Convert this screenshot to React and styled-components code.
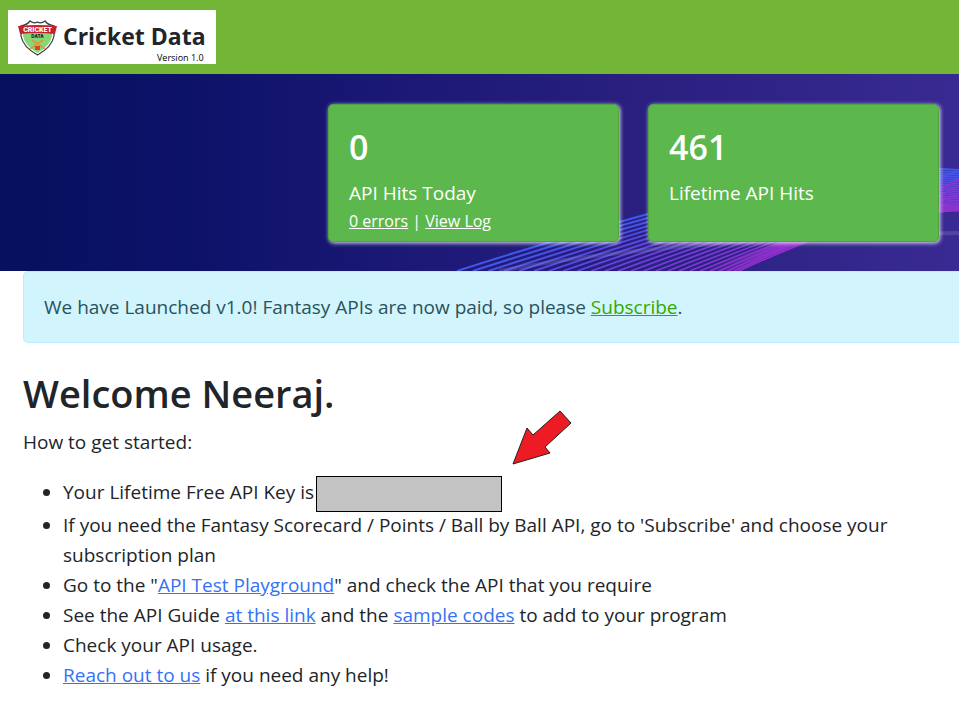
import React from 'react';
import styled, { createGlobalStyle } from 'styled-components';

const GlobalStyle = createGlobalStyle`
  * {
    box-sizing: border-box;
  }

  body {
    margin: 0;
    background: #fff;
    color: #212529;
    font-family: 'Segoe UI', 'Open Sans', 'Noto Sans', sans-serif;
    font-size: 19px;
    line-height: 30px;
  }
`;

const Header = styled.header`
  display: flex;
  padding: 10px 8px;
  background: #73b536;
`;

const Brand = styled.a`
  display: flex;
  align-items: center;
  gap: 6px;
  height: 54px;
  padding: 2px 10px 0;
  background: #fff;
  color: #212529;
  text-decoration: none;
`;

const BrandText = styled.span`
  display: flex;
  flex-direction: column;
  align-items: flex-end;
  padding-top: 8px;
`;

const BrandName = styled.span`
  font-size: 23px;
  font-weight: 700;
  line-height: 32px;
`;

const BrandVersion = styled.span`
  padding-right: 2px;
  color: #000;
  font-size: 9px;
  line-height: 12px;
`;

const Banner = styled.section`
  position: relative;
  overflow: hidden;
  background: linear-gradient(90deg, #06105e 0%, #0d1268 20%, #1b1876 42%, #2a2080 68%, #382a92 100%);
`;

const WaveArt = styled.svg`
  position: absolute;
  right: 0;
  bottom: 0;
  width: 520px;
  height: 120px;
`;

const Stats = styled.div`
  position: relative;
  display: grid;
  grid-template-columns: repeat(3, 1fr);
  gap: 29px;
  padding: 30px 20px 29px 8px;
`;

const StatCard = styled.article`
  min-height: 138px;
  padding: 19px 20px 6px;
  border: 1px solid #4fa440;
  border-radius: 5px;
  background: #5cb74c;
  box-shadow: 1px 1px 4px rgba(255, 255, 255, 0.9);
  color: #fff;

  &:first-child {
    grid-column: 2;
  }
`;

const StatValue = styled.h2`
  margin: 0 0 8px;
  font-size: 34px;
  font-weight: 600;
  line-height: 46px;
`;

const StatLabel = styled.div`
  line-height: 30px;
`;

const StatLinks = styled.div`
  font-size: 16px;
  line-height: 26px;

  a {
    color: #fff;
  }
`;

const Main = styled.main`
  padding-left: 23px;
`;

const Alert = styled.div`
  padding: 20px;
  border: 1px solid #b6effb;
  border-right: none;
  border-radius: 5px 0 0 5px;
  background: #d2f4fc;
  color: #29525c;

  a {
    color: #35a800;
  }
`;

const Content = styled.div`
  padding: 26px 24px 24px 0;
`;

const Title = styled.h1`
  margin: 0 0 10px;
  font-size: 38px;
  font-weight: 600;
  line-height: 48px;
`;

const Intro = styled.p`
  margin: 0 0 18px;
`;

const Steps = styled.ul`
  margin: 0;
  padding-left: 40px;

  a {
    color: #3472f7;
  }
`;

const KeyStep = styled.li`
  position: relative;
  line-height: 35px;
`;

const KeyBox = styled.span`
  display: inline-block;
  width: 186px;
  height: 36px;
  margin: -2px 0 -2px 2px;
  border: 1px solid #000;
  background: #c3c3c3;
  vertical-align: middle;
`;

const Arrow = styled.svg`
  position: absolute;
  left: 448px;
  bottom: 43px;
  width: 62px;
  height: 58px;
`;

const LINES = 24;

const mix = (a, b, t) => a + (b - a) * t;

const Shield = () => (
  <svg width="39" height="36" viewBox="0 0 39 36" aria-hidden="true">
    <path d="M3 6 Q9 5 12 1 Q16 4 19.500 2 Q23 4 27 1 Q30 5 36 6 V16 Q34 27 19.500 35 Q5 27 3 16Z" fill="#fff" stroke="#3a4141" strokeWidth="1.300" />
    <path d="M5 11 H34 V16 Q32 26 19.500 33 Q7 26 5 16Z" fill="#86d874" />
    <path d="M12 29 L25 20 M27 29 L14 20" stroke="#d79a45" strokeWidth="1.800" />
    <path d="M17 26 H22 V30 H17Z" fill="#e14425" />
    <path d="M0 6 Q19.500 4 39 6 L37 14 Q19.500 12 2 14Z" fill="#c5202f" />
    <text x="19.500" y="12" textAnchor="middle" fill="#fff" fontFamily="Roboto, sans-serif" fontSize="7" fontWeight="900">CRICKET</text>
    <text x="19.500" y="18" textAnchor="middle" fill="#222" fontFamily="Roboto, sans-serif" fontSize="5" fontWeight="900">DATA</text>
  </svg>
);

const Waves = () => (
  <WaveArt viewBox="0 0 520 120" aria-hidden="true">
    <defs>
      <linearGradient id="ribbon" x1="0" x2="1">
        <stop offset="0" stopColor="#8a30d0" stopOpacity="0" />
        <stop offset="0.300" stopColor="#9230cc" />
        <stop offset="1" stopColor="#7a3fd6" />
      </linearGradient>
    </defs>
    <path d="M265 120 Q330 92 400 72 T520 54 V60 Q440 66 366 90 Q330 104 300 120Z" fill="url(#ribbon)" />
    {Array.from({ length: LINES }, (_, i) => {
      // the strands sit closer together towards the lower edge of the ribbon
      const t = 1 - (1 - i / (LINES - 1)) ** 1.3;
      const color = `rgb(${mix(62, 145, t)}, ${mix(88, 48, t)}, ${mix(235, 205, t)})`;
      return (
        <path
          key={i}
          d={`M${mix(18, 300, t)} 120 Q${mix(180, 370, t)} ${mix(68, 88, t)} ${mix(300, 420, t)} ${mix(40, 72, t)} T520 ${mix(19, 60, t)}`}
          fill="none"
          stroke={color}
          strokeWidth={mix(2, 1.5, t)}
        />
      );
    })}
    <path d="M498 40 L520 29 M498 46 L520 35 M498 52 L520 42" stroke="#9230cc" strokeWidth="1.500" />
    <path d="M60 120 Q240 86 520 82" fill="none" stroke="#8f86c8" strokeOpacity="0.300" strokeWidth="4" />
  </WaveArt>
);

const App = () => (
  <>
    <GlobalStyle />
    <Header>
      <Brand href="#">
        <Shield />
        <BrandText>
          <BrandName>Cricket Data</BrandName>
          <BrandVersion>Version 1.0</BrandVersion>
        </BrandText>
      </Brand>
    </Header>
    <Banner>
      <Waves />
      <Stats>
        <StatCard>
          <StatValue>0</StatValue>
          <StatLabel>API Hits Today</StatLabel>
          <StatLinks>
            <a href="#errors">0 errors</a> | <a href="#log">View Log</a>
          </StatLinks>
        </StatCard>
        <StatCard>
          <StatValue>461</StatValue>
          <StatLabel>Lifetime API Hits</StatLabel>
        </StatCard>
      </Stats>
    </Banner>
    <Main>
      <Alert role="status">
        We have Launched v1.0! Fantasy APIs are now paid, so please <a href="#subscribe">Subscribe</a>.
      </Alert>
      <Content>
        <Title>Welcome Neeraj.</Title>
        <Intro>How to get started:</Intro>
        <Steps>
          <KeyStep>
            Your Lifetime Free API Key is
            <KeyBox />
            <Arrow viewBox="0 0 62 58" aria-hidden="true">
              <path d="M2 55 L16 19 L22 26 L49 2 L60 14 L34 38 L39 44Z" fill="#ed1c24" stroke="#222" strokeWidth="1" />
            </Arrow>
          </KeyStep>
          <li>
            If you need the Fantasy Scorecard / Points / Ball by Ball API, go to 'Subscribe' and choose your
            subscription plan
          </li>
          <li>
            Go to the "<a href="#playground">API Test Playground</a>" and check the API that you require
          </li>
          <li>
            See the API Guide <a href="#guide">at this link</a> and the <a href="#samples">sample codes</a> to add to
            your program
          </li>
          <li>Check your API usage.</li>
          <li>
            <a href="#contact">Reach out to us</a> if you need any help!
          </li>
        </Steps>
      </Content>
    </Main>
  </>
);

export default App;
